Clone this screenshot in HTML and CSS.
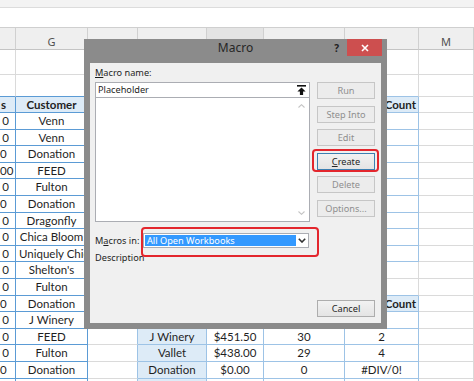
FILE: index.html
```html
<!DOCTYPE html>
<html lang="en">
<head>
  <meta charset="UTF-8">
  <meta name="viewport" content="width=device-width, initial-scale=1.0">
  <title>Macro</title>
  <link rel="stylesheet" href="styles.css">
</head>
<body>
  <div class="sheet">
    <div class="topbar"></div>
    <div class="formula"></div>
    <div class="row colhead">
      <div></div><div>G</div><div></div><div></div><div class="hsel"></div><div></div><div></div><div>M</div>
    </div>
    <div class="row tall">
      <div></div><div></div><div></div><div></div><div></div><div></div><div></div><div></div>
    </div>
    <div class="row mid">
      <div class="tbb"></div><div class="tbb"></div><div></div><div></div><div></div><div></div><div class="tbb2"></div><div></div>
    </div>
    <div class="row">
      <div class="tb th tail s">s</div><div class="tb th">Customer</div><div></div><div></div><div></div><div></div><div class="t2 th cnt">Count</div><div></div>
    </div>
    <div class="row">
      <div class="tb tail">0</div><div class="tb">Venn</div><div></div><div></div><div></div><div></div><div class="t2"></div><div></div>
    </div>
    <div class="row">
      <div class="tb tail">0</div><div class="tb">Venn</div><div></div><div></div><div></div><div></div><div class="t2"></div><div></div>
    </div>
    <div class="row">
      <div class="tb tail cut">0</div><div class="tb">Donation</div><div></div><div></div><div></div><div></div><div class="t2"></div><div></div>
    </div>
    <div class="row">
      <div class="tb tail">00</div><div class="tb">FEED</div><div></div><div></div><div></div><div></div><div class="t2"></div><div></div>
    </div>
    <div class="row">
      <div class="tb tail">0</div><div class="tb">Fulton</div><div></div><div></div><div></div><div></div><div class="t2"></div><div></div>
    </div>
    <div class="row">
      <div class="tb tail cut">0</div><div class="tb">Donation</div><div></div><div></div><div></div><div></div><div class="t2"></div><div></div>
    </div>
    <div class="row">
      <div class="tb tail">0</div><div class="tb">Dragonfly</div><div></div><div></div><div></div><div></div><div class="t2"></div><div></div>
    </div>
    <div class="row">
      <div class="tb tail">0</div><div class="tb">Chica Bloom</div><div></div><div></div><div></div><div></div><div class="t2"></div><div></div>
    </div>
    <div class="row">
      <div class="tb tail">0</div><div class="tb lft">Uniquely Chic</div><div></div><div></div><div></div><div></div><div class="t2"></div><div></div>
    </div>
    <div class="row">
      <div class="tb tail">0</div><div class="tb">Shelton's</div><div></div><div></div><div></div><div></div><div></div><div></div>
    </div>
    <div class="row">
      <div class="tb tail">0</div><div class="tb">Fulton</div><div></div><div class="tbb2"></div><div class="tbb2"></div><div class="tbb2"></div><div class="tbb2"></div><div></div>
    </div>
    <div class="row">
      <div class="tb tail cut">0</div><div class="tb">Donation</div><div class="bl"></div><div class="t2 th"></div><div class="t2 th"></div><div class="t2 th"></div><div class="t2 th cnt">Count</div><div></div>
    </div>
    <div class="row">
      <div class="tb tail">0</div><div class="tb">J Winery</div><div class="bl"></div><div class="t2 fc"></div><div class="t2"></div><div class="t2"></div><div class="t2"></div><div></div>
    </div>
    <div class="row">
      <div class="tb tail">0</div><div class="tb">FEED</div><div class="bl"></div><div class="t2 fc">J Winery</div><div class="t2">$451.50</div><div class="t2">30</div><div class="t2">2</div><div></div>
    </div>
    <div class="row">
      <div class="tb tail">0</div><div class="tb">Fulton</div><div class="bl"></div><div class="t2 fc">Vallet</div><div class="t2">$438.00</div><div class="t2">29</div><div class="t2">4</div><div></div>
    </div>
    <div class="row">
      <div class="tb tail cut">0</div><div class="tb">Donation</div><div class="bl"></div><div class="t2 fc">Donation</div><div class="t2">$0.00</div><div class="t2">0</div><div class="t2">#DIV/0!</div><div></div>
    </div>
    <div class="row">
      <div class="tb"></div><div class="tb"></div><div class="bl"></div><div class="t2 fc"></div><div class="t2"></div><div class="t2"></div><div class="t2"></div><div></div>
    </div>
  </div>

  <div class="dialog">
    <div class="titlebar">
      <div></div>
      <div class="title">Macro</div>
      <div class="caption-btns">
        <span class="help">?</span>
        <span class="close">
          <svg width="8" height="8" viewBox="0 0 8 8"><path d="M1 1 7 7M7 1 1 7" stroke="#fff" stroke-width="1.6"/></svg>
        </span>
      </div>
    </div>
    <div class="client">
      <div class="pane">
        <div class="lbl"><u>M</u>acro name:</div>
        <div class="namebox">
          <span class="value">Placeholder</span>
          <span class="pick">
            <svg width="9" height="10" viewBox="0 0 9 10"><rect width="9" height="1.6" fill="#111"/><path d="M4.5 2.4 8.6 6.4H6.1V10H2.9V6.4H.4Z" fill="#111"/></svg>
          </span>
        </div>
        <div class="list">
          <svg width="7" height="4" viewBox="0 0 7 4"><path d="M.5 3.5 3.5.7 6.5 3.5" fill="none" stroke="#c4c4c4" stroke-width="1.1"/></svg>
          <svg width="7" height="4" viewBox="0 0 7 4"><path d="M.5.5 3.5 3.3 6.5.5" fill="none" stroke="#c4c4c4" stroke-width="1.1"/></svg>
        </div>
        <div class="inrow">
          <label>M<u>a</u>cros in:</label>
          <div class="combo">
            <span class="sel">All Open Workbooks</span>
            <span class="drop">
              <svg width="8" height="5" viewBox="0 0 8 5"><path d="M.8.8 4 4 7.2.8" fill="none" stroke="#333" stroke-width="1.6"/></svg>
            </span>
          </div>
        </div>
        <div class="desc">Description</div>
      </div>
      <div class="btns">
        <button class="btn" disabled>Run</button>
        <button class="btn" disabled>Step Into</button>
        <button class="btn" disabled>Edit</button>
        <button class="btn on default"><u>C</u>reate</button>
        <button class="btn" disabled>Delete</button>
        <button class="btn" disabled>Options...</button>
        <button class="btn on cancel">Cancel</button>
      </div>
    </div>
    <div class="mark mark-create"></div>
    <div class="mark mark-combo"></div>
  </div>
</body>
</html>
```

FILE: styles.css
```css
* {
  box-sizing: border-box;
}

body {
  margin: 0;
  width: 474px;
  height: 381px;
  overflow: hidden;
  position: relative;
  background: #fff;
  font-family: Lato, "Liberation Sans", sans-serif;
  color: #1f1f1f;
}

/* spreadsheet behind the dialog */
.topbar {
  height: 8px;
  background: #f3f3f3;
  border-bottom: 1px solid #dcdcdc;
}

.formula {
  height: 20px;
  border-bottom: 1px solid #cfcfcf;
}

.row {
  display: grid;
  grid-template-columns: 16px 72px 50px 69px 57px 81px 74px 55px;
  height: 16.6px;
}

.row > div {
  border-right: 1px solid #dadada;
  border-bottom: 1px solid #dadada;
  overflow: hidden;
  white-space: nowrap;
  text-align: center;
  font-size: 11.5px;
  line-height: 15.6px;
}

.row.colhead {
  height: 22px;
  background: #efefef;
}

.colhead > div {
  border-right-color: #d0d0d0;
  border-bottom-color: #c4c4c4;
  font-family: "Noto Sans", sans-serif;
  font-size: 11px;
  line-height: 14px;
  padding-top: 7px;
  color: #505050;
}

.colhead .hsel {
  background: #e4e4e4;
}

.row.tall {
  height: 25px;
}

.row.mid {
  height: 21.5px;
}

.row .tb {
  border-right-color: #5b9bd5;
  border-bottom-color: #5b9bd5;
}

.row .tbb {
  border-bottom-color: #5b9bd5;
}

.row .t2 {
  border-right-color: #9dc3e6;
  border-bottom-color: #9dc3e6;
}

.row .tbb2 {
  border-bottom-color: #9dc3e6;
}

.row .bl {
  border-right-color: #9dc3e6;
}

.row .th {
  background: #ddebf7;
  font-weight: bold;
}

.row .fc {
  background: #ddebf7;
}

.row .cnt {
  text-align: right;
  padding-right: 2px;
}

.row .tail {
  text-align: right;
  padding-right: 6px;
}

.row .tail.cut {
  padding-right: 11px;
}

.row .tail.s {
  padding-right: 9px;
}

.row .lft {
  text-align: left;
  padding-left: 3px;
}

/* macro dialog */
.dialog {
  position: absolute;
  left: 84px;
  top: 39px;
  width: 303px;
  height: 290px;
  padding: 0 6px 6px;
  background: #8b8b8b;
  font-family: "Noto Sans", "Open Sans", sans-serif;
  font-size: 9.2px;
  color: #1e1e1e;
}

.titlebar {
  display: grid;
  grid-template-columns: 1fr auto 1fr;
  height: 24px;
  margin: 0 -6px;
}

.title {
  font-size: 12px;
  line-height: 17px;
  color: #262626;
}

.caption-btns {
  display: flex;
  justify-content: flex-end;
  align-items: flex-start;
}

.help {
  font-weight: bold;
  font-size: 10px;
  line-height: 18px;
  margin-right: 8px;
  color: #202020;
}

.close {
  width: 35px;
  height: 17px;
  margin-right: 5px;
  background: #cd4f4f;
  display: flex;
  align-items: center;
  justify-content: center;
}

.client {
  height: 260px;
  background: #f0f0f0;
  display: flex;
  gap: 7px;
  padding: 0 6px 6px 5px;
}

.pane {
  width: 215px;
}

.lbl {
  padding-top: 3px;
  line-height: 14px;
  margin-bottom: 2px;
}

.namebox {
  height: 16px;
  border: 1px solid #abadb3;
  background: #fff;
  display: flex;
  justify-content: space-between;
}

.namebox .value {
  padding-left: 2px;
  line-height: 14px;
}

.pick {
  width: 16px;
  display: flex;
  align-items: center;
  justify-content: center;
}

.list {
  height: 124px;
  border: 1px solid #abadb3;
  border-top: 0;
  background: #fff;
  display: flex;
  flex-direction: column;
  justify-content: space-between;
  align-items: flex-end;
  padding: 6px 4px 6px 0;
}

.inrow {
  display: flex;
  margin-top: 11px;
  height: 15px;
  line-height: 15px;
}

.inrow label {
  width: 48px;
}

.combo {
  width: 166px;
  border: 1px solid #abadb3;
  background: #fff;
  display: flex;
  padding: 1px 0 1px 1px;
}

.combo .sel {
  flex: 1;
  background: #3399ff;
  color: #fff;
  line-height: 11px;
  padding-left: 2px;
}

.drop {
  width: 12px;
  display: flex;
  align-items: center;
  justify-content: center;
}

.desc {
  margin-top: 3px;
  line-height: 14px;
}

.btns {
  width: 58px;
  display: flex;
  flex-direction: column;
  gap: 6.5px;
  padding-top: 19px;
}

.btn {
  height: 17px;
  padding: 0;
  border: 1px solid #c6c6c6;
  background: #ececec;
  color: #8f8f8f;
  font: inherit;
  line-height: 15px;
}

.btn.on {
  color: #262626;
  border-color: #adadad;
  background: linear-gradient(#f2f2f2, #e4e4e4);
}

.btn.default {
  border-color: #3c7fb1;
}

.btn.cancel {
  margin-top: auto;
}

/* red annotation boxes */
.mark {
  position: absolute;
  border: 2px solid #e3262d;
  border-radius: 4px;
}

.mark-create {
  left: 228px;
  top: 110px;
  width: 67px;
  height: 23px;
}

.mark-combo {
  left: 57px;
  top: 188px;
  width: 178px;
  height: 30px;
}
```
